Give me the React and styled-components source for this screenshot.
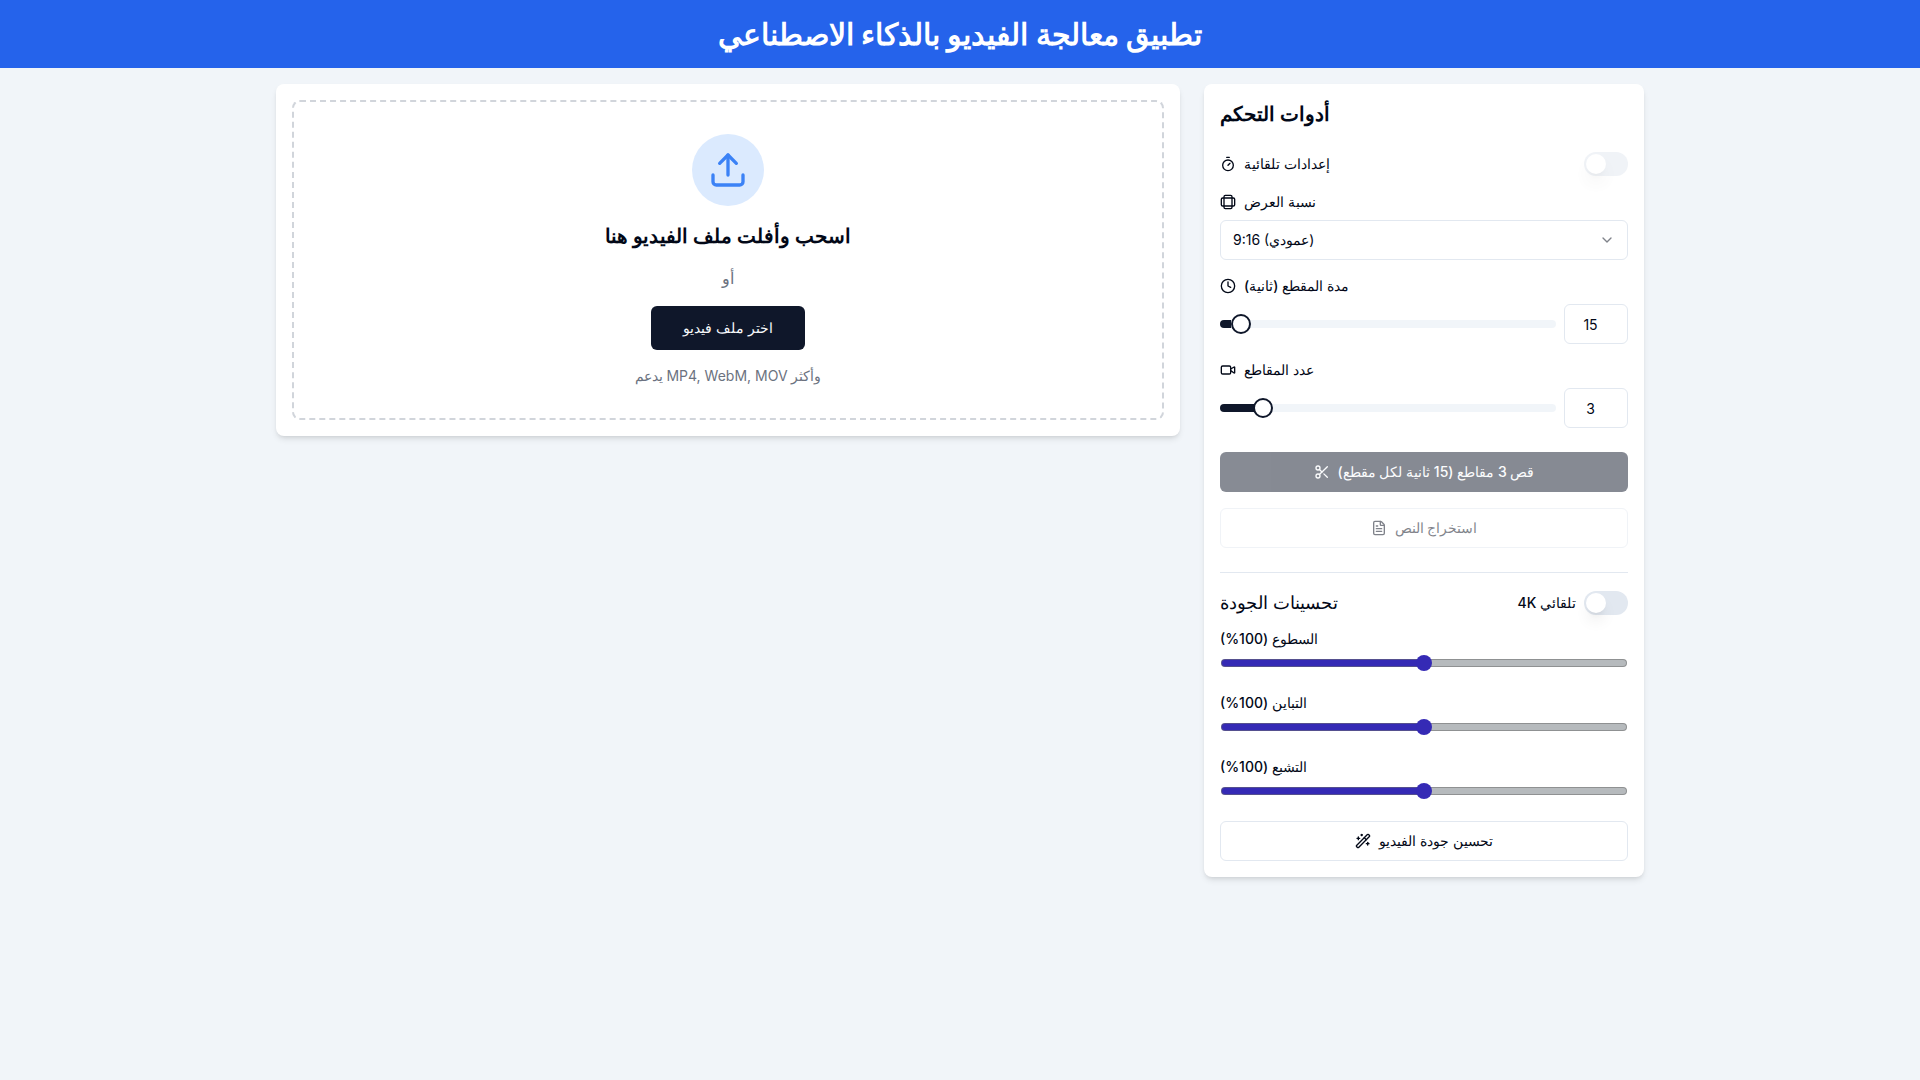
import React, { useState } from "react";
import styled, { createGlobalStyle } from "styled-components";
import { Upload, Timer, Ratio, Clock, Video, Scissors, FileText, ChevronDown, WandSparkles } from "lucide-react";

const GlobalStyle = createGlobalStyle`
  *, *::before, *::after { box-sizing: border-box; }
  body {
    margin: 0;
    min-height: 100vh;
    background: #f1f5f9;
    color: #020817;
    font-family: Inter, sans-serif;
    font-size: 16px;
    line-height: 24px;
  }
  h1, h2, h3, p { margin: 0; }
  button, input, select { font: inherit; color: inherit; margin: 0; }
`;

const Header = styled.header`
  background: #2563eb;
  color: #fff;
  padding: 16px;
  text-align: center;
`;

const PageTitle = styled.h1`
  font-size: 30px;
  line-height: 36px;
  font-weight: 700;
`;

const Main = styled.main`
  max-width: 1400px;
  margin: 0 auto;
  padding: 16px;
  display: grid;
  grid-template-columns: repeat(3, minmax(0, 1fr));
  gap: 24px;
  align-items: start;
`;

const Card = styled.section`
  grid-column: span ${(p) => p.$span || 1};
  background: #fff;
  border-radius: 8px;
  padding: 16px;
  box-shadow: 0 4px 6px -1px rgba(0, 0, 0, 0.1), 0 2px 4px -2px rgba(0, 0, 0, 0.1);
`;

const DropZone = styled.div`
  display: flex;
  flex-direction: column;
  align-items: center;
  gap: 16px;
  padding: 32px;
  border: 2px dashed #d1d5db;
  border-radius: 8px;
  text-align: center;
`;

const UploadBadge = styled.div`
  display: flex;
  padding: 16px;
  border-radius: 50%;
  background: #dbeafe;
  color: #3b82f6;
`;

const Title = styled.h2`
  font-size: 20px;
  line-height: 28px;
  font-weight: ${(p) => p.$weight || 700};
`;

const Muted = styled.p`
  color: #6b7280;
  font-size: ${(p) => (p.$small ? 14 : 16)}px;
  line-height: ${(p) => (p.$small ? 20 : 24)}px;
`;

const Button = styled.button`
  display: flex;
  align-items: center;
  justify-content: center;
  gap: 8px;
  height: ${(p) => (p.$large ? 44 : 40)}px;
  padding: 0 ${(p) => (p.$large ? 32 : 16)}px;
  border: ${(p) => (p.$outline ? "1px solid #e2e8f0" : "0")};
  border-radius: 6px;
  background: ${(p) => (p.$outline ? "#fff" : "#0f172a")};
  color: ${(p) => (p.$outline ? "#020817" : "#f8fafc")};
  font-size: 14px;
  line-height: 20px;
  font-weight: 500;
  &:disabled { opacity: 0.5; }
`;

const Stack = styled.div`
  display: flex;
  flex-direction: column;
  gap: ${(p) => p.$gap}px;
`;

const Row = styled.div`
  display: flex;
  align-items: center;
  justify-content: space-between;
  gap: 8px;
`;

const Label = styled.label`
  display: flex;
  align-items: center;
  gap: 8px;
  font-size: 14px;
  line-height: 20px;
  font-weight: 500;
`;

const Switch = styled.input`
  appearance: none;
  flex: none;
  width: 44px;
  height: 24px;
  padding: 2px;
  border-radius: 12px;
  background: #e2e8f0;
  &::before {
    content: "";
    display: block;
    width: 20px;
    height: 20px;
    border-radius: 50%;
    background: #fff;
    box-shadow: 0 10px 15px -3px rgba(0, 0, 0, 0.1), 0 4px 6px -4px rgba(0, 0, 0, 0.1);
  }
  &:checked { background: #0f172a; }
  &:checked::before { margin-left: 20px; }
  &:disabled { opacity: 0.5; }
`;

const SelectBox = styled.div`
  display: grid;
  align-items: center;
  & > * { grid-area: 1 / 1; }
  & > svg {
    justify-self: end;
    margin-right: 13px;
    opacity: 0.5;
    pointer-events: none;
  }
`;

const Select = styled.select`
  appearance: none;
  width: 100%;
  height: 40px;
  padding: 0 12px;
  border: 1px solid #e2e8f0;
  border-radius: 6px;
  background: #fff;
  font-size: 14px;
  line-height: 20px;
`;

const NumberInput = styled.input`
  flex: none;
  width: 64px;
  height: 40px;
  padding: 8px 8px 8px 12px;
  border: 1px solid #e2e8f0;
  border-radius: 6px;
  background: #fff;
  font-size: 14px;
  line-height: 20px;
  text-align: center;
`;

const Slider = styled.input`
  appearance: none;
  flex: 1;
  min-width: 0;
  height: 20px;
  background: none;
  &::-webkit-slider-runnable-track {
    height: 8px;
    border-radius: 4px;
    background: linear-gradient(to right, #0f172a var(--fill), #f1f5f9 var(--fill));
  }
  &::-webkit-slider-thumb {
    appearance: none;
    width: 20px;
    height: 20px;
    margin-top: -6px;
    border: 2px solid #0f172a;
    border-radius: 50%;
    background: #fff;
  }
`;

const QualitySlider = styled.input`
  appearance: none;
  display: block;
  width: 100%;
  height: 16px;
  padding: 0 1px;
  background: none;
  &::-webkit-slider-runnable-track {
    height: 8px;
    border: 1px solid rgba(112, 112, 112, 0.55);
    border-radius: 4px;
    background: linear-gradient(to right, #352ab5 var(--fill), #b6babd var(--fill)) border-box;
  }
  &::-webkit-slider-thumb {
    appearance: none;
    width: 16px;
    height: 16px;
    margin-top: -5px;
    border: 0;
    border-radius: 50%;
    background: #352ab5;
  }
`;

const Quality = styled.div`
  display: flex;
  flex-direction: column;
  gap: 12px;
  padding-top: 16px;
  border-top: 1px solid #e2e8f0;
`;

const QualityTitle = styled.h3`
  font-size: 18px;
  line-height: 28px;
  font-weight: 500;
`;

function SliderField({ id, icon, label, min, max, value, onChange }) {
  const update = (e) => onChange(Number(e.target.value));
  const fill = `${((value - min) / (max - min)) * 100}%`;
  return (
    <Stack $gap={8}>
      <Label htmlFor={id}>{icon}{label}</Label>
      <Row>
        <Slider id={id} type="range" min={min} max={max} value={value} onChange={update} style={{ "--fill": fill }} />
        <NumberInput type="number" aria-label={label} min={min} max={max} value={value} onChange={update} />
      </Row>
    </Stack>
  );
}

function QualityField({ id, name }) {
  const [value, setValue] = useState(100);
  return (
    <Stack $gap={6}>
      <Label htmlFor={id}>{`${name} (${value}%)`}</Label>
      <QualitySlider
        id={id}
        type="range"
        min={0}
        max={200}
        value={value}
        onChange={(e) => setValue(Number(e.target.value))}
        style={{ "--fill": `${value / 2}%` }}
      />
    </Stack>
  );
}

export default function App() {
  const [duration, setDuration] = useState(15);
  const [count, setCount] = useState(3);
  return (
    <>
      <GlobalStyle />
      <Header>
        <PageTitle>تطبيق معالجة الفيديو بالذكاء الاصطناعي</PageTitle>
      </Header>
      <Main>
        <Card $span={2}>
          <DropZone>
            <UploadBadge><Upload size={40} /></UploadBadge>
            <Title $weight={600}>اسحب وأفلت ملف الفيديو هنا</Title>
            <Muted>أو</Muted>
            <Button type="button" $large>اختر ملف فيديو</Button>
            <Muted $small>يدعم MP4, WebM, MOV وأكثر</Muted>
          </DropZone>
        </Card>
        <Card>
          <Stack $gap={24}>
            <Title>أدوات التحكم</Title>
            <Stack $gap={16}>
              <Row>
                <Label htmlFor="auto"><Timer size={16} />إعدادات تلقائية</Label>
                <Switch id="auto" type="checkbox" role="switch" disabled />
              </Row>
              <Stack $gap={8}>
                <Label htmlFor="ratio"><Ratio size={16} />نسبة العرض</Label>
                <SelectBox>
                  <Select id="ratio" defaultValue="9:16">
                    <option value="9:16">9:16 (عمودي)</option>
                  </Select>
                  <ChevronDown size={16} />
                </SelectBox>
              </Stack>
              <SliderField id="duration" icon={<Clock size={16} />} label="مدة المقطع (ثانية)" min={5} max={300} value={duration} onChange={setDuration} />
              <SliderField id="count" icon={<Video size={16} />} label="عدد المقاطع" min={1} max={20} value={count} onChange={setCount} />
            </Stack>
            <Stack $gap={16}>
              <Button type="button" disabled><Scissors size={16} />{`قص ${count} مقاطع (${duration} ثانية لكل مقطع)`}</Button>
              <Button type="button" $outline disabled><FileText size={16} />استخراج النص</Button>
            </Stack>
            <Quality>
              <Row>
                <QualityTitle>تحسينات الجودة</QualityTitle>
                <Label>4K تلقائي<Switch type="checkbox" role="switch" /></Label>
              </Row>
              <Stack $gap={22}>
                <QualityField id="brightness" name="السطوع" />
                <QualityField id="contrast" name="التباين" />
                <QualityField id="saturation" name="التشبع" />
                <Button type="button" $outline><WandSparkles size={16} />تحسين جودة الفيديو</Button>
              </Stack>
            </Quality>
          </Stack>
        </Card>
      </Main>
    </>
  );
}
